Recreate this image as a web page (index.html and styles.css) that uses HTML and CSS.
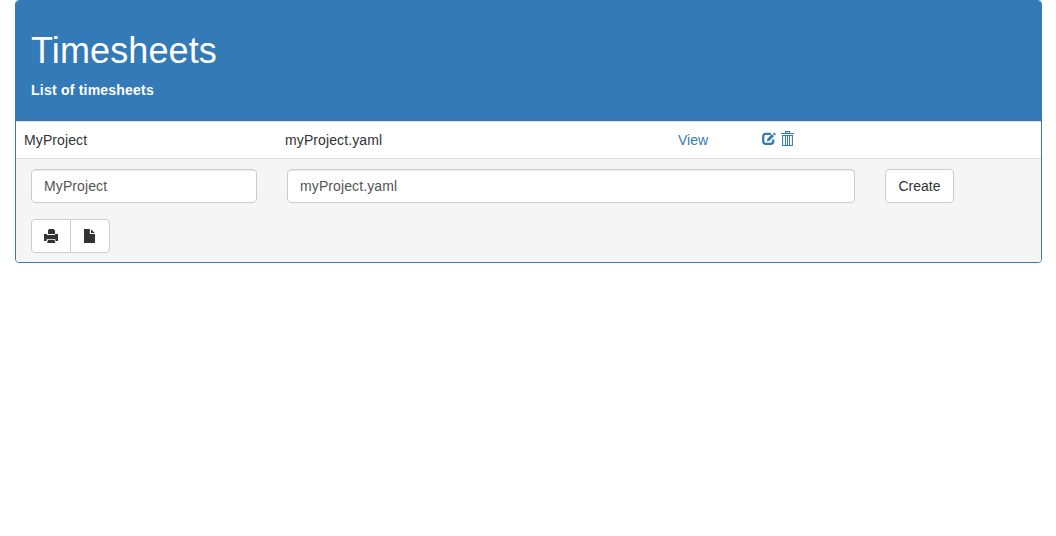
FILE: index.html
```html
<!DOCTYPE html>
<html lang="en">
<head>
<meta charset="utf-8">
<title>Timesheets</title>
<link rel="stylesheet" href="styles.css">
</head>
<body>
<main class="panel">
  <header class="panel-heading">
    <h1>Timesheets</h1>
    <p>List of timesheets</p>
  </header>
  <div class="sheet-row">
    <span class="name">MyProject</span>
    <span class="name">myProject.yaml</span>
    <a class="view">View</a>
    <span class="actions">
      <svg class="icon-edit" viewBox="0 0 14 14" width="14" height="14"><path d="M8.8 1.9H3.8Q1.2 1.9 1.2 4.5V9.3Q1.2 11.9 3.8 11.9H8.6Q11.2 11.9 11.2 9.3V7.5" fill="none" stroke="currentColor" stroke-width="2.3"/><path d="M4.8 9.4 5.4 6.7 10 2.1 12 4.1 7.4 8.7ZM11 1.6 12.2.4 14 2.2 12.8 3.4Z" fill="currentColor"/></svg>
      <svg class="icon-trash" viewBox="0 0 13 16" width="13" height="16"><path d="M4.5 2.5V.6H8.5V2.5M0 2.5H13M1 4.5H12M1.6 4.5V14.5H11.4V4.5M4.5 5V14M6.5 5V14M8.5 5V14" fill="none" stroke="currentColor" stroke-width="1.05"/></svg>
    </span>
  </div>
  <footer class="panel-footer">
    <form class="create-form">
      <input class="name" aria-label="Project" value="MyProject">
      <input class="name" aria-label="File" value="myProject.yaml">
      <button type="button" class="btn">Create</button>
    </form>
    <div class="btn-group">
      <button type="button" class="btn" aria-label="Print"><svg viewBox="0 0 14 14" width="14" height="14"><path d="M5 0H9.5L11 1.5V5H4V1.5ZM0 5H3V6H11V5H14V12H11.5V10.2H2.5V12H0ZM4 11H10.5L11.5 14H3Z" fill="currentColor"/></svg></button>
      <button type="button" class="btn" aria-label="New file"><svg viewBox="0 0 14 14" width="14" height="14"><path d="M1 0H6.8V5H12V14H1ZM8 .2 11.8 4H8Z" fill="currentColor"/></svg></button>
    </div>
  </footer>
</main>
</body>
</html>
```
FILE: styles.css
```css
* { box-sizing: border-box; }
body {
  margin: 0;
  background: #fff;
  color: #333;
  font: 14px/20px "Liberation Sans", Arial, sans-serif;
}
.panel {
  width: 1027px;
  height: 263px;
  margin-left: 15px;
  border: 1px solid #337ab7;
  border-radius: 4px;
  overflow: hidden;
}
.panel-heading {
  height: 120px;
  padding: 30px 15px 0;
  background: #337ab7;
  color: #fff;
}
h1 {
  margin: 0 0 9px;
  font-size: 36px;
  font-weight: 500;
  line-height: 40px;
  letter-spacing: .12px;
}
.panel-heading p { margin: 0; font-weight: bold; letter-spacing: .22px; }
.sheet-row {
  display: grid;
  grid-template-columns: 261px 393px 84px 1fr;
  height: 37px;
  padding: 8px 8px 0;
  border-top: 1px solid #ddd;
}
.view, .actions { color: #337ab7; }
.actions { display: flex; align-items: flex-start; gap: 5px; }
.icon-edit { margin-top: 2px; }
.icon-trash { margin-top: 1px; }
.panel-footer {
  height: 104px;
  padding: 10px 15px;
  border-top: 1px solid #ddd;
  background: #f5f5f5;
}
.create-form {
  display: grid;
  grid-template-columns: 226px 568px 69px;
  gap: 30px;
  margin: 0 0 16px;
}
input, .btn {
  height: 34px;
  padding: 6px 12px;
  border: 1px solid #ccc;
  border-radius: 4px;
  background: #fff;
  font: inherit;
}
input {
  min-width: 0;
  color: #555;
  box-shadow: inset 0 1px 1px rgba(0, 0, 0, .075);
}
.name { letter-spacing: .11px; }
.btn { color: #333; }
.btn svg { display: block; }
.btn-group { display: flex; }
.btn-group .btn { width: 40px; }
.btn-group .btn:first-child { border-radius: 4px 0 0 4px; }
.btn-group .btn + .btn { margin-left: -1px; border-radius: 0 4px 4px 0; }
```
